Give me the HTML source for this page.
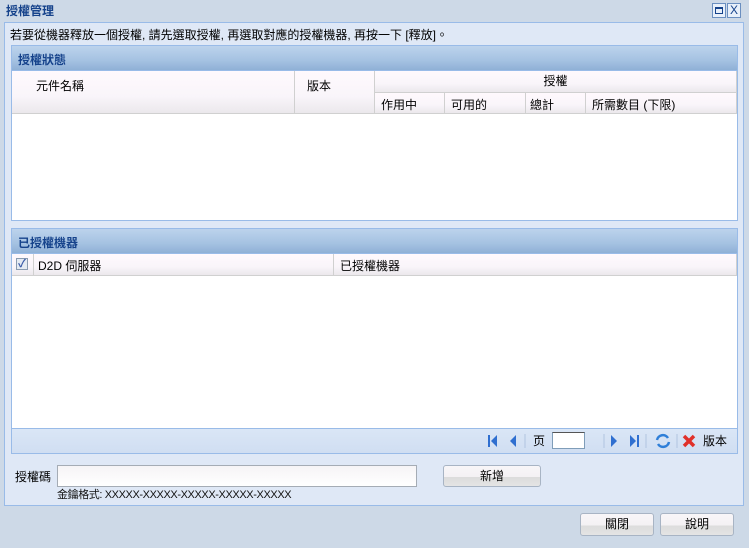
<!DOCTYPE html>
<html><head><meta charset="utf-8"><style>
*{box-sizing:border-box;margin:0;padding:0}
body{width:749px;height:548px;background:#cdd9e7;font-family:"Liberation Sans","Noto Sans CJK TC",sans-serif;font-size:12px;color:#000;position:relative;overflow:hidden}
.a{position:absolute}
.hdr{background:linear-gradient(#bcd3ec,#a5c2e2 60%,#8fb0d6);color:#15428b;font-weight:bold;font-size:12px;padding:5px 6px;height:25px;border-bottom:1px solid #99bbe8}
.th{background:linear-gradient(#fff9fd 0%,#f9f5fa 60%,#ebe8ec 100%);border-right:1px solid #d0d0d0;border-bottom:1px solid #d0d0d0}
.btn{border:1px solid #a8b4c4;border-radius:3px;background:linear-gradient(#f8f6f8 0,#f4f1f4 55%,#dcdcdc 56%,#e4e4e4 100%);text-align:center;line-height:20px}
</style></head><body>
<div class="a" style="left:6px;top:2px;color:#15428b;font-weight:bold">授權管理</div>
<div class="a" style="left:712px;top:3px;width:14px;height:15px;border:1px solid #6b8fc0;background:#e8f0fa"><div style="margin:3px 2px;width:8px;height:7px;border:1px solid #15428b;border-top-width:2px"></div></div>
<div class="a" style="left:727px;top:3px;width:14px;height:15px;border:1px solid #6b8fc0;background:#e8f0fa;color:#15428b;font-size:12px;line-height:13px;text-align:center">X</div>
<div class="a" style="left:4px;top:22px;width:740px;height:484px;background:#dfe8f6;border:1px solid #99bbe8"></div>
<div class="a" style="left:10px;top:26px">若要從機器釋放一個授權, 請先選取授權, 再選取對應的授權機器, 再按一下 [釋放]。</div>
<div class="a" style="left:11px;top:45px;width:727px;height:176px;border:1px solid #99bbe8;background:#fff">
 <div class="hdr">授權狀態</div>
 <div class="a th" style="left:0;top:25px;width:283px;height:43px;padding:6px 0 0 24px">元件名稱</div>
 <div class="a th" style="left:283px;top:25px;width:80px;height:43px;padding:6px 0 0 12px">版本</div>
 <div class="a th" style="left:363px;top:25px;width:362px;height:22px;text-align:center;line-height:20px">授權</div>
 <div class="a th" style="left:363px;top:47px;width:70px;height:21px;padding:3px 6px">作用中</div>
 <div class="a th" style="left:433px;top:47px;width:81px;height:21px;padding:3px 6px">可用的</div>
 <div class="a th" style="left:514px;top:47px;width:60px;height:21px;padding:3px 4px">總計</div>
 <div class="a th" style="left:574px;top:47px;width:151px;height:21px;padding:3px 6px">所需數目 (下限)</div>
</div>
<div class="a" style="left:11px;top:228px;width:727px;height:226px;border:1px solid #99bbe8;background:#fff">
 <div class="hdr">已授權機器</div>
 <div class="a th" style="left:0;top:25px;width:22px;height:22px"><div style="margin:4px 4px;width:12px;height:12px;border:1px solid #8a9bb0;background:#e4eaf2;color:#3a5aa8;font-size:11px;line-height:10px;text-align:center;font-weight:bold">✓</div></div>
 <div class="a th" style="left:22px;top:25px;width:300px;height:22px;padding:3px 4px">D2D 伺服器</div>
 <div class="a th" style="left:322px;top:25px;width:403px;height:22px;padding:3px 6px">已授權機器</div>
 <div class="a" style="left:0;top:199px;width:725px;height:25px;background:linear-gradient(#dae6f6,#d0def2);border-top:1px solid #99bbe8"></div>
</div>
<svg class="a" style="left:486px;top:432px" width="250" height="18">
 <rect x="2" y="3" width="2" height="12" fill="#2f6fd0"/><path d="M11 3 L5 9 L11 15Z" fill="#2f6fd0"/>
 <path d="M30 3 L24 9 L30 15Z" fill="#2f6fd0"/>
 <line x1="39" y1="2" x2="39" y2="16" stroke="#b0c4e0"/>
 <line x1="118" y1="2" x2="118" y2="16" stroke="#b0c4e0"/>
 <path d="M125 3 L131 9 L125 15Z" fill="#2f6fd0"/>
 <path d="M144 3 L150 9 L144 15Z" fill="#2f6fd0"/><rect x="151" y="3" width="2" height="12" fill="#2f6fd0"/>
 <line x1="160" y1="2" x2="160" y2="16" stroke="#b0c4e0"/>
 <path d="M171 8 A6 6 0 0 1 182 6 M183 10 A6 6 0 0 1 172 12" stroke="#2f7fd8" stroke-width="2.5" fill="none"/>
 <line x1="191" y1="2" x2="191" y2="16" stroke="#b0c4e0"/>
 <path d="M198 4 L208 14 M208 4 L198 14" stroke="#e0302a" stroke-width="3.5"/>
</svg>
<div class="a" style="left:533px;top:432px">页</div>
<div class="a" style="left:552px;top:432px;width:33px;height:17px;border:1px solid #7f9db9;border-top-color:#555;background:#fff"></div>
<div class="a" style="left:703px;top:432px">版本</div>
<div class="a" style="left:15px;top:468px">授權碼</div>
<div class="a" style="left:57px;top:465px;width:360px;height:22px;border:1px solid #a5acb5;background:linear-gradient(#f6f4f6,#fff)"></div>
<div class="a btn" style="left:443px;top:465px;width:98px;height:22px">新增</div>
<div class="a" style="left:57px;top:486px;font-size:11px;color:#111;letter-spacing:-0.4px">金鑰格式: XXXXX-XXXXX-XXXXX-XXXXX-XXXXX</div>
<div class="a btn" style="left:580px;top:513px;width:74px;height:23px">關閉</div>
<div class="a btn" style="left:660px;top:513px;width:74px;height:23px">說明</div>
</body></html>
